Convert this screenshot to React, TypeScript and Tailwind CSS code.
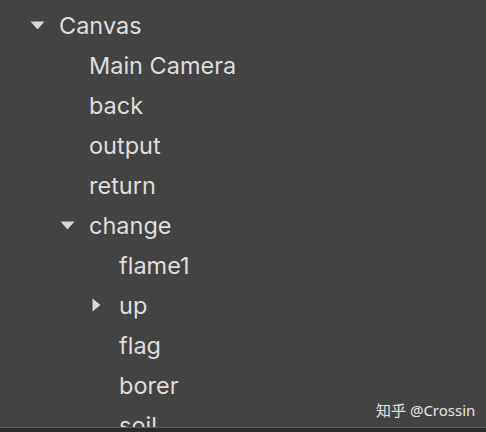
import React from "react";

const Down = () => (
  <svg width="15" height="9" viewBox="0 0 15 9" className="shrink-0">
    <path d="M0.5 0.5 L14.5 0.5 L7.5 8.5 Z" fill="#d8d8d8" />
  </svg>
);
const Right = () => (
  <svg width="9" height="14" viewBox="0 0 9 14" className="shrink-0">
    <path d="M0.5 0.5 L8.5 7 L0.5 13.5 Z" fill="#d8d8d8" />
  </svg>
);

type Row = { label: string; indent: number; icon?: "down" | "right" };
const rows: Row[] = [
  { label: "Canvas", indent: 0, icon: "down" },
  { label: "Main Camera", indent: 1 },
  { label: "back", indent: 1 },
  { label: "output", indent: 1 },
  { label: "return", indent: 1 },
  { label: "change", indent: 1, icon: "down" },
  { label: "flame1", indent: 2 },
  { label: "up", indent: 2, icon: "right" },
  { label: "flag", indent: 2 },
  { label: "borer", indent: 2 },
  { label: "soil", indent: 2 },
];

const padClass = ["pl-[59px]", "pl-[89px]", "pl-[119px]"];

export default function App() {
  return (
    <div className="w-[486px] h-[432px] bg-[#434343] flex flex-col overflow-hidden relative" style={{ fontFamily: 'Inter, "Noto Sans CJK SC", sans-serif' }}>
      <div className="h-[427px] overflow-hidden pt-[6px]">
        {rows.map((r) => (
          <div key={r.label} className={`relative h-[40px] flex items-center text-[23.5px] text-[#dedede] ${padClass[r.indent]}`}>
            {r.icon === "down" && (
              <span className="absolute top-[15px]" style={{ left: r.indent * 30 + 30 }}>
                <Down />
              </span>
            )}
            {r.icon === "right" && (
              <span className="absolute top-[12px]" style={{ left: r.indent * 30 + 32 }}>
                <Right />
              </span>
            )}
            <span>{r.label}</span>
          </div>
        ))}
      </div>
      <div className="h-[1px] bg-[#5c5c5c]" />
      <div className="flex-1 bg-[#2b2b2b]" />
      <div className="absolute left-[376px] top-[399px] text-[15px] text-[#e6e6e6]" style={{ fontFamily: '"Noto Sans", "Noto Sans CJK SC", sans-serif' }}>
        知乎 @Crossin
      </div>
    </div>
  );
}
